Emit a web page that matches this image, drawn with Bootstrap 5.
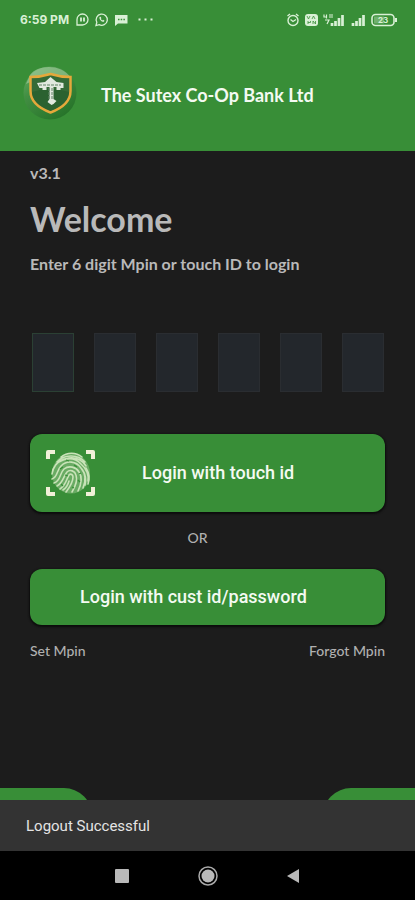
<!DOCTYPE html>
<html lang="en" data-bs-theme="dark">
<head>
<meta charset="utf-8">
<meta name="viewport" content="width=device-width, initial-scale=1">
<title>The Sutex Co-Op Bank Ltd</title>
<link href="https://cdn.jsdelivr.net/npm/bootstrap@5.3.0/dist/css/bootstrap.min.css" rel="stylesheet">
<style>
:root { --brand: #388e37; --page: #1c1c1c; --ink: #b9b9b9; }
body { background: var(--page); color: var(--ink); font-family: Lato, "Liberation Sans", sans-serif; }
.brand-bg { background: var(--brand); }
.status-bar { height: 39px; padding: 0 17px 0 20px; color: #d9f0d5; }
.clock { font: 700 12px/16px Inter, sans-serif; }
.app-bar { height: 112px; padding: 0 23px; gap: 24px; }
.app-title { font-size: 18px; line-height: 24px; font-weight: 700; color: #f4faf2; }
.emblem { margin-bottom: 4px; }
.content { padding: 13px 30px 0; }
.version { font-size: 16px; line-height: 18px; font-weight: 700; }
.welcome { color: var(--ink); font-size: 34px; line-height: 44px; font-weight: 700; margin: 15px 0 13px; }
.prompt { font-size: 16px; line-height: 20px; font-weight: 700; margin-bottom: 59px; }
.pins { padding: 0 1px 0 2px; margin-bottom: 42px; }
.pin-box { width: 42px; height: 59px; background: #23272c; border: 1px solid #2a2d31; border-radius: 0; padding: 0; text-align: center; color: #fff; }
.pin-box:first-child { border-color: #2b4034; }
.action { background: var(--brand); color: #f4faf2; border: 0; border-radius: 12px; font-family: Roboto, sans-serif; font-weight: 500; font-size: 18px; line-height: 24px; box-shadow: 0 1px 2px 1px #0c0c0c; }
.action:hover { background: #327f31; color: #fff; }
.touch { height: 78px; padding: 0 15px; gap: 46px; }
.cust { height: 56px; padding: 0 50px; }
.divider-text { font-size: 14px; line-height: 20px; font-weight: 500; margin: 16px 0 21px; padding-right: 20px; color: #b0b0b0; }
.small-link { font-size: 14px; line-height: 20px; font-weight: 500; color: #b0b0b0; }
.links { padding-top: 16px; }
.tabs-row { height: 12px; overflow: hidden; }
.tab-end { width: 92px; height: 58px; }
.tab-left { border-radius: 0 28px 0 0; }
.tab-right { border-radius: 28px 0 0 0; }
.snack { background: #333; color: #e4e4e4; height: 51px; padding: 0 26px; font: 400 15px/20px Roboto, sans-serif; }
.nav-keys { background: #000; height: 49px; gap: 64px; }
.key { background: none; border: 0; padding: 0; width: 22px; height: 22px; line-height: 0; }
</style>
<script src="https://cdn.jsdelivr.net/npm/bootstrap@5.3.0/dist/js/bootstrap.bundle.min.js" defer></script>
</head>
<body class="min-vh-100 d-flex flex-column">
<header class="brand-bg">
  <div class="status-bar d-flex align-items-center justify-content-between">
    <div class="d-flex align-items-center">
      <span class="clock">6:59 PM</span>
      <svg class="ms-1" width="82" height="16" viewBox="-3 0 82 16" fill="none" stroke="currentColor" stroke-width="1.3" aria-hidden="true">
        <path d="M1 13V7.500a5.500 5.500 0 1 1 5.500 5.500z"/><path d="M5 5.500v4M8 5.500v4" stroke-width="1.800"/>
        <path d="M20 13.500l.8-3.200a5.600 5.600 0 1 1 2.300 2.300z"/><path d="M23.500 5c-.5 2.500 2 5 4.500 4.800l.4-1.300-1.400-.7-.8.700-1.400-1.500.6-.8-.7-1.400z" fill="currentColor" stroke="none"/>
        <path d="M39 3h12.500v8.500H42L39 14z" fill="currentColor" stroke="none"/><path d="M42 7.500h1.500m1.200 0h1.500m1.200 0h1.500" stroke="#388e37"/>
        <path d="M62.500 7.500h2m4 0h2m4 0h2" stroke-width="1.800"/>
      </svg>
    </div>
    <svg width="112" height="16" viewBox="0 0 112 16" fill="none" stroke="currentColor" stroke-width="1.400" aria-hidden="true">
      <circle cx="7" cy="8.500" r="5"/><path d="M1.500 4 4 2m6 0 2.500 2M4.500 7.500 7 9.500l3-2"/>
      <rect x="19" y="2" width="13" height="12" rx="3" fill="currentColor" stroke="none"/><path d="m21 4 1.500 3L24 4m2 3 1.500-3L29 7m-7 2v3m0-1.500h2.500V9M27 12V9l2.500 3V9" stroke="#388e37" stroke-width=".8"/>
      <path d="M38 2.500v2.500h3m-.5-2.500v4M43 3h4m-4 2h4M39 8h4l-2 4" stroke-width="1.200"/>
      <path d="M46 14v-3m3.500 3V9m3.500 5V6m3.500 8V3M67 14v-3m3.500 3V9m3.500 5V6m3.500 8V3" stroke-width="2.700"/>
      <rect x="86" y="2.500" width="22" height="11" rx="3.500" stroke-width="1.600"/><path d="M88 4.500h10v7H88z" fill="currentColor" opacity=".35" stroke="none"/><path d="M110 6v4" stroke-width="2"/>
      <text x="92" y="11" font-family="Inter" font-size="8" font-weight="700" fill="currentColor" stroke="none">23</text>
    </svg>
  </div>
  <div class="app-bar d-flex align-items-center">
    <svg class="emblem" width="54" height="54" viewBox="0 0 54 54" role="img" aria-label="Bank emblem">
      <defs><linearGradient id="orb" x1="0" y1="0" x2=".7" y2="1"><stop offset="0" stop-color="#6bb267"/><stop offset=".4" stop-color="#438f43"/><stop offset="1" stop-color="#267329"/></linearGradient></defs>
      <circle cx="27" cy="27" r="26.500" fill="url(#orb)"/>
      <path d="M7 9C14-1 38-3 48 12L46 21C35 10 18 10 3 18z" fill="#a9cfa4" opacity=".6"/>
      <path d="M7.500 11Q18 11 27.500 8 37 11 47.500 11V25q0 14-20 21.500Q7.500 39 7.500 25z" fill="#356b37" stroke="#e5a83b" stroke-width="2.500"/>
      <path d="M9 26Q27 20 46 26q0 11-18.500 19Q9 37 9 26z" fill="#245c2c" opacity=".6"/>
      <path d="m14 17 8-1 5.500-5 6 5 7 1v5h-3v2h-4v-3h-3v12l3 2-3 3-2 1-4-3 2-3V21h-3v3h-4v-2h-3z" fill="#e2e9df"/>
      <path d="M16 19h22M26 22v12M29 22v12" stroke="#638266" stroke-width="1" stroke-dasharray="3 1"/>
    </svg>
    <div class="app-title">The Sutex Co-Op Bank Ltd</div>
  </div>
</header>
<main class="content">
  <div class="version">v3.1</div>
  <h1 class="welcome">Welcome</h1>
  <p class="prompt" id="prompt">Enter 6 digit Mpin or touch ID to login</p>
  <div class="pins d-flex justify-content-between" role="group" aria-labelledby="prompt">
    <input class="pin-box" type="password" maxlength="1" inputmode="numeric" aria-label="Digit 1">
    <input class="pin-box" type="password" maxlength="1" inputmode="numeric" aria-label="Digit 2">
    <input class="pin-box" type="password" maxlength="1" inputmode="numeric" aria-label="Digit 3">
    <input class="pin-box" type="password" maxlength="1" inputmode="numeric" aria-label="Digit 4">
    <input class="pin-box" type="password" maxlength="1" inputmode="numeric" aria-label="Digit 5">
    <input class="pin-box" type="password" maxlength="1" inputmode="numeric" aria-label="Digit 6">
  </div>
  <button type="button" class="btn action touch w-100 d-flex align-items-center">
    <svg width="51" height="50" viewBox="0 0 51 50" fill="none" aria-hidden="true">
      <path d="M3 11V4h7M41 4h7v7M3 39v7h7M41 46h7v-7" stroke="#f1f0d8" stroke-width="4" stroke-linejoin="round"/>
      <ellipse cx="26" cy="25.500" rx="19" ry="20" fill="#b5d8a5" opacity=".4"/>
      <g stroke="#c9e3b8" stroke-width="1.600" stroke-linecap="round">
        <path d="M16 9C22 4 31 4 37 9M12 14C19 6 33 6 40 14M9 20C14 9 33 5 41 18M7 26C9 11 27 6 36 16c6 5 8 12 7 17M7 31c6-2 4-8 9-13 6-6 15-5 20 2 5 6 5 13 2 20M9 35c7-2 5-9 10-14 5-4 12-2 15 3 4 6 2 13-1 19M12 38c6-3 6-9 10-14 3-3 8-1 9 3 2 6-1 12-4 17M15 41c6-4 6-9 9-14 2-2 4 0 4 2 0 6-4 11-7 15M24 33c-1 4-3 7-6 9M41 20c3 5 4 11 2 16M37 21c4 6 4 12 3 16"/>
      </g>
      <path d="m15 21 3-2m3-7 3 1m5 4 3 2m-12 8 3 1m10 4 2 2m-19 2 2 2m16-12 2-1m-9 14 2 1" stroke="#388e37" stroke-width="1.300"/>
    </svg>
    <span>Login with touch id</span>
  </button>
  <div class="divider-text text-center">OR</div>
  <button type="button" class="btn action cust w-100 text-start">Login with cust id/password</button>
  <div class="links d-flex justify-content-between">
    <a href="#" class="small-link text-decoration-none">Set Mpin</a>
    <a href="#" class="small-link text-decoration-none">Forgot Mpin</a>
  </div>
</main>
<footer class="mt-auto">
  <div class="tabs-row d-flex justify-content-between">
    <div class="tab-end tab-left brand-bg"></div>
    <div class="tab-end tab-right brand-bg"></div>
  </div>
  <div class="snack d-flex align-items-center" role="status">Logout Successful</div>
  <nav class="nav-keys d-flex align-items-center justify-content-center" aria-label="System">
    <button type="button" class="key" aria-label="Recent apps"><svg width="22" height="22"><rect x="4" y="4" width="14" height="14" rx="1" fill="#b9b9b9"/></svg></button>
    <button type="button" class="key" aria-label="Home"><svg width="22" height="22" fill="none"><circle cx="11" cy="11" r="9" stroke="#aaa" stroke-width="1.500"/><circle cx="11" cy="11" r="6.500" fill="#b9b9b9"/></svg></button>
    <button type="button" class="key" aria-label="Back"><svg width="22" height="22"><path d="M4 11 16 4v14z" fill="#b9b9b9"/></svg></button>
  </nav>
</footer>
</body>
</html>
